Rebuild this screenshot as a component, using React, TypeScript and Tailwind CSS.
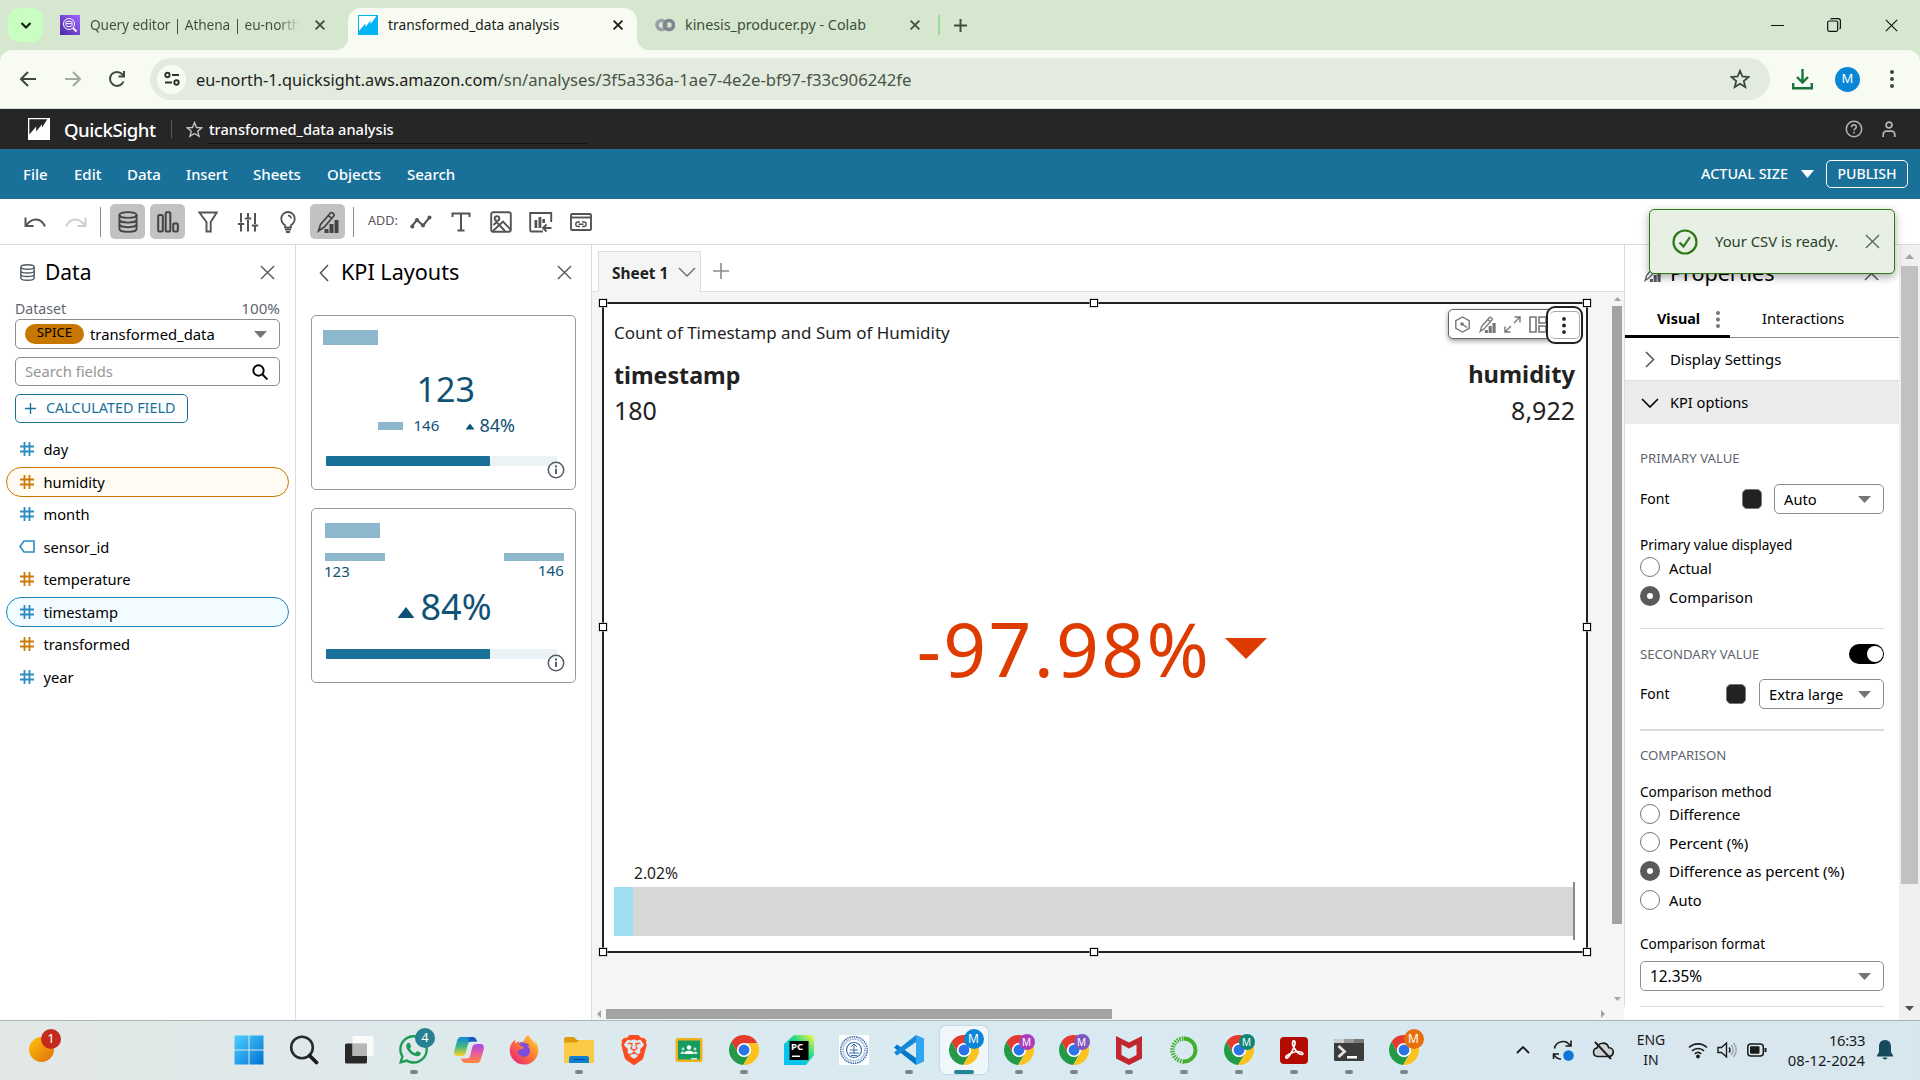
import React from 'react';
import { FaWhatsapp, FaFirefoxBrowser } from 'react-icons/fa';
import { SiBrave } from 'react-icons/si';

type IconProps = { w?: number; h?: number; box?: string; className?: string; sw?: number; children: React.ReactNode };

function Icon({ w = 20, h, box, className = '', sw = 1.6, children }: IconProps) {
  const height = h ?? w;
  return (
    <svg width={w} height={height} viewBox={box ?? `0 0 ${w} ${height}`} fill="none" stroke="currentColor" strokeWidth={sw} className={`shrink-0 ${className}`}>
      {children}
    </svg>
  );
}

const Close = ({ w = 16, sw = 1.5, className = '' }: { w?: number; sw?: number; className?: string }) => (
  <Icon w={w} box="0 0 16 16" sw={sw} className={className}><path d="M1 1l14 14M15 1L1 15" /></Icon>
);
const Database = ({ w = 20, h = 22 }: { w?: number; h?: number }) => (
  <Icon w={w} h={h} box="0 0 20 22" sw={1.9}>
    <ellipse cx="10" cy="4" rx="8.6" ry="2.9" />
    <path d="M1.4 4v14c0 1.600 3.900 2.900 8.600 2.900s8.600-1.300 8.600-2.900V4M1.400 8.700c0 1.600 3.900 2.900 8.600 2.900s8.600-1.300 8.600-2.900M1.400 13.300c0 1.600 3.900 2.900 8.600 2.900s8.600-1.300 8.600-2.900" />
  </Icon>
);
const PencilChart = ({ w = 22 }: { w?: number }) => (
  <Icon w={w} box="0 0 22 22" sw={1.7}>
    <path d="M1.500 20l2-6.500L13.200 2.200a1.800 1.800 0 0 1 2.600 0l.6.500a1.800 1.800 0 0 1 .2 2.500L7 16.300zM11.300 4.500l3.300 2.900" />
    <path d="M7.500 18h4v4h-4zM12.500 13h4v9h-4zM17.500 9h4v13h-4z" fill="currentColor" stroke="none" />
  </Icon>
);
const Dots = ({ h = 18, r = 2 }: { h?: number; r?: number }) => (
  <svg width="6" height={h} viewBox={`0 0 6 ${h}`} fill="currentColor" className="shrink-0">
    <circle cx="3" cy={r} r={r} /><circle cx="3" cy={h / 2} r={r} /><circle cx="3" cy={h - r} r={r} />
  </svg>
);
const Caret = ({ w = 14, h = 7, className = '' }: { w?: number; h?: number; className?: string }) => (
  <svg width={w} height={h} viewBox="0 0 14 7" preserveAspectRatio="none" className={`shrink-0 ${className}`}><path d="M0 0h14L7 7z" fill="currentColor" /></svg>
);
const Info = () => (
  <Icon w={18} className="text-[#545b64]" sw={1.5}><circle cx="9" cy="9" r="7.700" /><path d="M9 7.800v5.200M9 4.600v1.800" strokeWidth="1.900" /></Icon>
);

/* ---------- Browser window ---------- */

function TabStrip() {
  return (
    <div className="flex h-[50px] bg-[#d5e7ce] text-[#3e4f3c]">
      <div className="flex w-[348px] items-center pl-2">
        <div className="flex h-[34px] w-[35px] items-center justify-center rounded-[11px] bg-[#c8ffc0] text-[#101f10]">
          <Icon w={12} sw={2.200}><path d="M1.500 4l4.500 4.500L10.500 4" /></Icon>
        </div>
        <svg width="20" height="20" viewBox="0 0 20 20" className="ml-[17px] shrink-0">
          <defs><linearGradient id="ath" x1="0" y1="1" x2="1" y2="0"><stop stopColor="#4d27a8" /><stop offset="1" stopColor="#a166ff" /></linearGradient></defs>
          <path d="M0 0h20v20H0z" fill="url(#ath)" />
          <g fill="none" stroke="#fff" strokeWidth="1"><circle cx="9" cy="9" r="5.500" /><path d="M13 13l3.500 3.500" strokeWidth="1.800" /><ellipse cx="9" cy="7.500" rx="3" ry="1.300" /><path d="M6 7.500v3c0 1.500 6 1.500 6 0v-3" /></g>
        </svg>
        <div className="ml-[10px] w-[209px] overflow-hidden bg-linear-to-r from-[#3e4f3c] from-90% to-transparent bg-clip-text text-[13.7px] tracking-[-0.1px] whitespace-nowrap text-transparent">Query editor | Athena | eu-north</div>
        <Close w={10} sw={2.900} className="ml-[16px]" />
      </div>
      <div className="relative mt-2 flex w-[289px] items-center rounded-t-[13px] bg-[#f8fbf2] pb-[8px] pl-[10px] text-[#1b1d1a]">
        <svg width="12" height="12" viewBox="0 0 12 12" className="absolute bottom-0 -left-3"><path d="M12 0v12H0A12 12 0 0 0 12 0z" fill="#f8fbf2" /></svg>
        <svg width="12" height="12" viewBox="0 0 12 12" className="absolute -right-3 bottom-0"><path d="M0 0v12h12A12 12 0 0 1 0 0z" fill="#f8fbf2" /></svg>
        <svg width="20" height="20" viewBox="0 0 20 20" className="shrink-0">
          <path d="M0 0h20v20H0z" fill="#00b4f5" /><path d="M1 1h17.500L12.500 9V5.500L7.500 12V8.500L1 16z" fill="#fff" />
        </svg>
        <div className="ml-[10px] w-[225px] text-[13.8px]">transformed_data analysis</div>
        <Close w={10} sw={2.900} />
      </div>
      <div className="flex flex-1 items-center pl-[18px]">
        <Icon w={20} h={14} sw={3.600} className="text-[#9aa0a6]"><circle cx="6.500" cy="7" r="4.500" /><circle cx="14" cy="7" r="4.500" stroke="#7e8590" /></Icon>
        <div className="ml-[10px] w-[223px] text-[14.3px]">kinesis_producer.py - Colab</div>
        <Close w={10} sw={2.900} className="ml-[2px]" />
        <div className="ml-[18px] h-5 w-[2px] bg-[#9bdb91]" />
        <Icon w={13} sw={2} className="ml-[14px]"><path d="M6.500 0v13M0 6.500h13" /></Icon>
      </div>
      <div className="flex items-center pr-[22px] text-[#111]">
        <div className="h-px w-[13px] bg-[#111]" />
        <Icon w={14} sw={1.200} className="ml-[43px]"><rect x=".7" y="3" width="10" height="10.300" rx="1.500" /><path d="M3.500 1.200c.3-.5.800-.6 1.500-.6h6c1.300 0 2.400 1 2.400 2.400v6.500c0 .7-.2 1.200-.8 1.600" /></Icon>
        <Close w={13} sw={1.400} className="ml-[44px]" />
      </div>
    </div>
  );
}

function AddressBar() {
  return (
    <div className="bg-[#d5e7ce]">
      <div className="flex h-[59px] items-center rounded-t-xl border-b border-[#cfe3cc] bg-[#f8fbf2] text-[#3c4a3a]">
        <Icon w={16} sw={2} className="ml-5"><path d="M16 8H1.500M8 1L1 8l7 7" /></Icon>
        <Icon w={16} sw={2} className="ml-[29px] text-[#a3aaa0]"><path d="M0 8h14.500M8 1l7 7-7 7" /></Icon>
        <Icon w={18} sw={2} className="ml-[27px]"><path d="M15.500 11.500A7 7 0 1 1 14.200 4.200L16 6" /><path d="M16 1v5.500h-5.500" /></Icon>
        <div className="ml-[24px] flex h-[42px] w-[1620px] items-center rounded-full bg-[#e3ebdf] pl-[7px]">
          <div className="flex h-[29px] w-[29px] items-center justify-center rounded-full bg-[#f8fbf2] text-[#2b332a]">
            <Icon w={16} sw={1.900}><circle cx="3.400" cy="4" r="2.200" /><path d="M8 4h7M1 11.500h7" /><circle cx="12.500" cy="11.500" r="2.200" /></Icon>
          </div>
          <div className="ml-[10px] flex items-baseline pt-px text-[16.3px]">
            <span className="text-[#1b1d1a]">eu-north-1.quicksight.aws.amazon.com</span>
            <span className="text-[16.7px] text-[#4a5448]">/sn/analyses/3f5a336a-1ae7-4e2e-bf97-f33c906242fe</span>
          </div>
          <Icon w={20} sw={1.800} className="mr-5 ml-auto"><path d="M10 1.800l2.400 5.700 6.100.5-4.700 4 1.500 6-5.300-3.200L4.700 18l1.500-6-4.700-4 6.100-.5z" /></Icon>
        </div>
        <Icon w={21} sw={2.400} className="ml-[22px] text-[#18743a]"><path d="M10.500 0v13M5 8l5.500 5.500L16 8M1.200 14v5.300h18.600V14" /></Icon>
        <div className="ml-[22px] flex h-[25px] w-[25px] items-center justify-center rounded-full bg-[#0a86d6] text-[13px] text-white">M</div>
        <div className="ml-[29px]"><Dots h={18} r={2} /></div>
      </div>
    </div>
  );
}

/* ---------- QuickSight header ---------- */

function AppHeader() {
  return (
    <div className="flex h-10 items-center bg-[#262626] pl-7 text-white">
      <svg width="22" height="22" viewBox="0 0 22 22" className="shrink-0"><path d="M0 0h22v22H0z" fill="#fff" /><path d="M1.300 1.300h18L14 9.500V6.300L8.200 13.500V8.500L1.300 16.500z" fill="#262626" /></svg>
      <div className="ml-[14px] w-[92px] pt-[2px] text-[18.6px] font-medium tracking-tight">QuickSight</div>
      <div className="ml-[15px] h-[18px] w-px bg-[#5a5a5a]" />
      <Icon w={17} sw={1.300} className="ml-[14px] text-[#c8c8c8]"><path d="M8.500 1.500l2 5 5.400.3-4.200 3.400 1.400 5.200-4.600-2.900-4.600 2.900 1.400-5.200L1.100 6.800l5.400-.3z" /></Icon>
      <div className="ml-1 flex h-[29px] w-[380px] items-center border-b border-[#111] pt-[2px] pl-[2px] text-[14.600px] font-medium">transformed_data analysis</div>
      <div className="ml-auto flex items-center pr-[24px] text-[#b5b5b5]">
        <Icon w={18} sw={1.500}><circle cx="9" cy="9" r="7.700" /><path d="M6.600 7.300C6.700 4 11.400 4.200 11.300 7c0 1.600-2.300 1.700-2.300 3.500M9 11.800v1.600" /></Icon>
        <Icon w={14} h={16} sw={1.700} className="ml-[19px]"><circle cx="7" cy="4" r="2.900" /><path d="M1.200 16v-2.500c0-2 1.400-3.300 3.300-3.300h5c1.900 0 3.300 1.300 3.300 3.300V16" /></Icon>
      </div>
    </div>
  );
}

function MenuBar() {
  return (
    <div className="flex h-[50px] items-center bg-[#19719a] pl-[23px] text-[15px] font-medium text-white">
      <div className="w-[51px]">File</div>
      <div className="w-[53px]">Edit</div>
      <div className="w-[59px]">Data</div>
      <div className="w-[67px] pt-px text-[14.600px]">Insert</div>
      <div className="w-[74px]">Sheets</div>
      <div className="w-[80px]">Objects</div>
      <div>Search</div>
      <div className="mr-[13px] ml-auto text-[14.4px]">ACTUAL SIZE</div>
      <Caret w={13} h={8} />
      <div className="mr-3 ml-[12px] flex h-[28px] w-[82px] items-center justify-center rounded-[5px] border border-white text-[14.1px]">PUBLISH</div>
    </div>
  );
}

const Tool = ({ active, children }: { active?: boolean; children: React.ReactNode }) => (
  <div className={`flex h-[35px] w-[35px] items-center justify-center rounded-[5px] ${active ? 'bg-[#c2c2c2] text-[#444]' : ''}`}>{children}</div>
);

function Toolbar() {
  return (
    <div className="flex h-[46px] items-center border-b border-[#dcdcdc] bg-white pl-[17px] text-[#545454]">
      <div className="flex items-center gap-[6px]">
        <Tool><Icon w={22} h={14} sw={2}><path d="M1.500 2.500v8.500h8M2 10.500C8 2 17 2.500 21 11.500" /></Icon></Tool>
        <Tool><Icon w={22} h={14} sw={2} className="text-[#cfcfcf]"><path d="M20.500 2.500v8.500h-8M20 10.500C14 2 5 2.500 1 11.500" /></Icon></Tool>
      </div>
      <div className="ml-[7px] h-[30px] w-px bg-[#8c8c8c]" />
      <div className="ml-[9px] flex gap-[5px]">
        <Tool active><Database /></Tool>
        <Tool active><Icon w={22} sw={2}><rect x="1.200" y="4" width="4.600" height="16.500" rx="1" /><rect x="8.700" y="1.200" width="4.600" height="19.300" rx="1" /><rect x="16.200" y="12.500" width="4.600" height="8" rx="1" /></Icon></Tool>
        <Tool><Icon w={20} h={22} sw={1.900}><path d="M1.300 1.500h17.400l-6 9.500v9.500H8.500V11z" /></Icon></Tool>
        <Tool><Icon w={22} sw={2}><path d="M4 2v9.500M4 14v6.500M11 2v4.500M11 9v11.500M18 2v11M18 15.500v5M.8 13h6.400M7.800 7.500h6.400M14.800 14.500h6.400" /></Icon></Tool>
        <Tool><Icon w={18} h={22} sw={1.800}><path d="M6 16.300v-2.100C3.500 12.500 2.300 10.400 2.300 7.700a6.700 6.700 0 0 1 13.400 0c0 2.700-1.200 4.800-3.700 6.500v2.100zM6 18.500h6M7 21h4" /><path d="M9 4.500c2 .2 3 1.200 3.200 3" strokeWidth="1.400" /></Icon></Tool>
        <Tool active><PencilChart /></Tool>
      </div>
      <div className="ml-[8px] h-[30px] w-px bg-[#8c8c8c]" />
      <div className="ml-[14px] w-[35px] text-[12.6px]">ADD:</div>
      <div className="flex items-center gap-[5px]">
        <Tool><Icon w={22} h={14} sw={2}><path d="M1.500 11.500L7 5l6 5.500L20 2" /><g fill="currentColor" stroke="none"><circle cx="2.300" cy="11.500" r="2" /><circle cx="7" cy="5" r="2" /><circle cx="13" cy="10.500" r="2" /><circle cx="19.500" cy="2.500" r="2" /></g></Icon></Tool>
        <Tool><Icon w={20} sw={2}><path d="M1.500 5V1.500h17V5M10 1.500v17M6.500 18.500h7" /></Icon></Tool>
        <Tool><Icon w={22} sw={1.900}><rect x="1.200" y="1.200" width="19.600" height="19.600" rx="2" /><circle cx="7" cy="7.500" r="2.300" /><path d="M3 20l10-9.500 8 8.500M3.500 14l3-3 8.500 9" /></Icon></Tool>
        <Tool><Icon w={24} h={22} sw={1.900}><path d="M14 20.500H2.500A1.300 1.300 0 0 1 1.200 19V2h21v9" /><path d="M14.500 17h8M17.500 13.500L14 17l3.500 3.500" /><path d="M5.500 9h2.800v8H5.500zM9.500 6h2.800v11H9.500zM13.300 8H16v4h-2.700z" fill="currentColor" stroke="none" /></Icon></Tool>
        <Tool><Icon w={22} h={18} sw={1.900}><rect x="1" y="1" width="20" height="16" rx="1" /><path d="M1 4.500h20" /><path d="M10 13.500H8a2.200 2.200 0 0 1 0-4.500h2M12 9h2a2.200 2.200 0 0 1 0 4.500h-2M8.500 11.200h5" strokeWidth="1.400" /></Icon></Tool>
      </div>
    </div>
  );
}

/* ---------- Left panels ---------- */

const Hash = ({ orange }: { orange?: boolean }) => (
  <Icon w={14} sw={1.800} className={orange ? 'text-[#cc7a0a]' : 'text-[#2b8cc4]'}><path d="M4.500 0v14M9.500 0v14M0 4.500h14M0 9.500h14" /></Icon>
);
const fields = [
  { name: 'day' },
  { name: 'humidity', orange: true, on: true },
  { name: 'month' },
  { name: 'sensor_id', tag: true },
  { name: 'temperature', orange: true },
  { name: 'timestamp', on: true },
  { name: 'transformed', orange: true },
  { name: 'year' },
];

function DataPanel() {
  return (
    <div className="w-[296px] shrink-0 border-r border-[#dcdcdc] bg-white">
      <div className="flex h-[55px] items-center pr-5 pl-[19px] text-[#545b64]">
        <Database w={17} h={17} />
        <div className="ml-[9px] flex-1 text-[21px] text-black">Data</div>
        <Close w={15} />
      </div>
      <div className="px-[15px]">
        <div className="flex h-[19px] items-center justify-between pb-[2px] text-[14.1px] text-[#5f6670]"><span>Dataset</span><span className="text-[15.2px]">100%</span></div>
        <div className="flex h-[30px] items-center rounded-[5px] border border-[#8c8c8c] pr-3 pl-[9px] text-[14.8px]">
          <div className="flex h-5 w-[59px] items-start justify-center rounded-full bg-[#c77700] text-[13.2px] leading-[17px]">SPICE</div>
          <div className="ml-[6px] flex-1">transformed_data</div>
          <Caret w={13} className="text-[#757575]" />
        </div>
        <div className="mt-2 flex h-[29px] items-center justify-between rounded-[5px] border border-[#8c8c8c] pr-[11px] pl-[9px] text-[14.8px] text-[#969696]">
          Search fields
          <Icon w={16} sw={1.900} className="text-black"><circle cx="6.500" cy="6.500" r="5.200" /><path d="M10.500 10.500l5 5" /></Icon>
        </div>
        <div className="mt-2 flex h-[29px] w-[173px] items-center rounded-[5px] border border-[#19719a] pb-px pl-[9px] text-[14.4px] text-[#19719a]">
          <Icon w={11} sw={1.400} className="mr-[10px]"><path d="M5.500 0v11M0 5.500h11" /></Icon>
          CALCULATED FIELD
        </div>
      </div>
      <div className="mt-[10px] pr-[6px] pl-[6px]">
        {fields.map((f) => (
          <div key={f.name} className="flex h-[32.5px] items-center">
            <div className={`flex h-[30px] w-full items-center rounded-full border pl-[13px] ${f.on ? (f.orange ? 'border-[#c77700] bg-[#fffbf2]' : 'border-[#1f83bd] bg-[#f2fbff]') : 'border-transparent'}`}>
              {f.tag ? <Icon w={16} h={13} sw={1.600} className="-mr-px -ml-px text-[#2b8cc4]"><path d="M5 1h10v11H5L1 6.500z" /></Icon> : <Hash orange={f.orange} />}
              <span className="ml-[9.500px] text-[14.700px]">{f.name}</span>
            </div>
          </div>
        ))}
      </div>
    </div>
  );
}

const LayoutCard = ({ children }: { children: React.ReactNode }) => (
  <div className="relative mx-[15px] h-[175px] rounded-[5px] border border-[#9a9a9a] bg-white">
    <svg width="263" height="173" viewBox="312 316 263 173" fill="#0f5275" className="font-['Noto_Sans',sans-serif]">
      {children}
      <rect x="326" y="456" width="231" height="10" rx="1" fill="#ecf3f6" />
      <rect x="326" y="456" width="164" height="10" rx="1" fill="#19719a" />
    </svg>
    <div className="absolute right-[10px] bottom-[10px]"><Info /></div>
  </div>
);

function LayoutsPanel() {
  return (
    <div className="w-[296px] shrink-0 border-r border-[#dcdcdc] bg-white">
      <div className="flex h-[70px] items-start pt-[12px] pr-[19px] pl-[23px] text-[#545b64]">
        <div className="flex h-[31px] w-full items-center">
          <Icon w={10} h={18}><path d="M9 1L1.500 9 9 17" /></Icon>
          <div className="ml-[12px] flex-1 text-[21.6px] text-black">KPI Layouts</div>
          <Close w={15} />
        </div>
      </div>
      <LayoutCard>
        <rect x="323" y="330" width="55" height="15" fill="#8db7cc" />
        <text x="416.500" y="402" fontSize="34">123</text>
        <rect x="378" y="422" width="25" height="8" fill="#8db7cc" />
        <text x="413.500" y="430.500" fontSize="15">146</text>
        <path d="M465.500 429.500h9l-4.500-6z" />
        <text x="479.500" y="432" fontSize="18">84%</text>
      </LayoutCard>
      <div className="h-[18px]" />
      <LayoutCard>
        <rect x="325" y="330" width="55" height="15" fill="#8db7cc" />
        <rect x="325" y="360" width="60" height="8" fill="#8db7cc" />
        <rect x="504" y="360" width="60" height="8" fill="#8db7cc" />
        <text x="324" y="383.500" fontSize="15">123</text>
        <text x="538" y="383" fontSize="15">146</text>
        <path d="M397.500 425h17l-8.500-11z" />
        <text x="420.500" y="427" fontSize="36">84%</text>
      </LayoutCard>
    </div>
  );
}

/* ---------- Sheet canvas ---------- */

const Handle = ({ className }: { className: string }) => <div className={`absolute h-2 w-2 border border-black bg-white outline outline-[#bbb]/50 ${className}`} />;

function KpiVisual() {
  return (
    <div className="relative flex h-[651px] w-[986px] flex-col border-2 border-[#222] bg-white pr-[11px] pl-[10px] text-[#222]">
      <Handle className="-top-[5px] -left-[5px]" /><Handle className="-top-[5px] left-[486px]" /><Handle className="-top-[5px] -right-[5px]" />
      <Handle className="top-[319px] -left-[5px]" /><Handle className="top-[319px] -right-[5px]" />
      <Handle className="-bottom-[5px] -left-[5px]" /><Handle className="-bottom-[5px] left-[486px]" /><Handle className="-bottom-[5px] -right-[5px]" />
      <div className="absolute top-[5px] right-[6px] flex h-[30px] w-[132px] items-center rounded-[5px] border border-[#666] bg-white pl-[5px] text-[#757575] shadow-[0_2px_5px_rgba(0,0,0,.4)]">
        <Icon w={17} sw={1.400}><path d="M8.500 1l6.700 3.700v7.600L8.500 16l-6.700-3.700V4.700z" /><circle cx="8" cy="8" r="1.800" fill="currentColor" stroke="none" /><path d="M8 8l5 3.500" /></Icon>
        <div className="ml-[8px]"><PencilChart w={17} /></div>
        <Icon w={17} sw={1.400} className="ml-[8px]"><path d="M10 7l6-6M10.500 1H16v5.500M7 10l-6 6M1 10.500V16h5.500" /></Icon>
        <Icon w={17} sw={1.600} className="ml-[8px]"><path d="M1 1h6v15H1zM10 1h7v6h-7zM10 10h7v6h-7z" /></Icon>
      </div>
      <div className="absolute top-[2px] right-[3px] flex h-[38px] w-[37px] items-center justify-center rounded-[9px] border-2 border-[#222] bg-white">
        <div className="flex h-[28px] w-[30px] items-center justify-center rounded-[5px] border-t border-r border-b border-[#aaa]"><Dots h={17} r={1.900} /></div>
      </div>
      <div className="mt-[16px] h-[25px] text-[17px] leading-[25px]">Count of Timestamp and Sum of Humidity</div>
      <div className="mt-[12px] flex h-[36px] items-center justify-between text-[23.2px] font-bold"><span>timestamp</span><span className="text-[23.700px]">humidity</span></div>
      <div className="flex h-[36px] items-center justify-between text-[25px]"><span>180</span><span>8,922</span></div>
      <div className="flex flex-1 items-center justify-center gap-[14px] pt-[5px] pr-[5px] text-[#de3b00]">
        <span className="text-[75px] leading-[100px] tracking-[2.300px]">-97.98%</span>
        <Caret w={42} h={21} />
      </div>
      <div className="ml-5 h-[20px] text-[15.600px] leading-[22px]">2.02%</div>
      <div className="mb-[11px] flex h-[58px] items-center">
        <div className="h-[49px] w-[19px] bg-[#9fdef1]" />
        <div className="h-[49px] flex-1 bg-[#d8d8d8]" />
        <div className="h-[58px] w-[2px] bg-[#888]" />
      </div>
    </div>
  );
}

function Canvas() {
  return (
    <div className="flex w-[1032px] shrink-0 flex-col bg-[#f5f5f5]">
      <div className="flex h-[47px] items-end border-b border-[#dcdcdc] bg-white pl-[6px]">
        <div className="-mb-px flex h-[41px] w-[103px] items-center border-x border-t border-[#dcdcdc] bg-[#f5f5f5] pt-[3px] pl-[13px] text-[15.400px] font-bold text-[#222]">
          Sheet 1
          <Icon w={18} h={10} sw={1.500} className="mb-1 ml-[10px] text-[#757575]"><path d="M1 1l8 8 8-8" /></Icon>
        </div>
        <Icon w={16} sw={1.600} className="mb-[12px] ml-[12px] text-[#8c8c8c]"><path d="M8 0v16M0 8h16" /></Icon>
      </div>
      <div className="flex h-[716px]">
        <div className="w-[1020px] pt-[10px] pl-[10px]"><KpiVisual /></div>
        <div className="flex w-[10px] flex-col items-center pt-[5px] text-[#a3a3a3]">
          <Caret w={7} h={4} className="rotate-180" />
          <div className="mt-[5px] h-[618px] w-[10px] bg-[#a3a3a3]" />
          <Caret w={7} h={4} className="mt-[73px]" />
        </div>
      </div>
      <div className="mt-px flex h-[10px] items-center pl-[3px] text-[#a3a3a3]">
        <Caret w={8} h={4} className="rotate-90" />
        <div className="ml-[3px] h-[10px] w-[506px] bg-[#a3a3a3]" />
        <Caret w={8} h={4} className="ml-[487px] -rotate-90" />
      </div>
    </div>
  );
}

/* ---------- Properties ---------- */

const Radio = ({ label, on }: { label: string; on?: boolean }) => (
  <div className="flex h-[28.700px] items-center text-[14.700px]">
    {on ? <div className="flex h-5 w-5 items-center justify-center rounded-full bg-[#5a5a5a]"><div className="h-[6px] w-[6px] rounded-full bg-white" /></div> : <div className="h-5 w-5 rounded-full border border-[#757575]" />}
    <span className={`ml-[9px] pt-px ${label.includes('%') ? 'text-[15px]' : ''}`}>{label}</span>
  </div>
);
const Group = ({ children }: { children: React.ReactNode }) => <div className="h-5 text-[13.2px] leading-5 text-[#5f6670]">{children}</div>;
const FontRow = ({ value, wide }: { value: string; wide?: boolean }) => (
  <div className="flex h-[30px] items-center">
    <span className="flex-1 pb-px text-[14px]">Font</span>
    <div className={`h-5 w-5 rounded-[5px] border border-[#777] bg-[#222] ${wide ? 'mr-[13px]' : 'mr-3'}`} />
    <div className={`flex h-[30px] items-center justify-between rounded-[5px] border border-[#8c8c8c] pr-3 pl-[9px] text-[14.700px] ${wide ? 'w-[125px]' : 'w-[110px]'}`}>
      {value}<Caret w={13} className="text-[#757575]" />
    </div>
  </div>
);

function Properties() {
  return (
    <div className="w-[275px] shrink-0 border-l border-[#dcdcdc] bg-white">
      <div className="flex h-[56px] items-center pr-5 pl-[19px] text-[#545b64]">
        <PencilChart w={17} />
        <div className="ml-[9px] flex-1 text-[21.500px] text-black">Properties</div>
        <Close w={15} />
      </div>
      <div className="flex h-[37px] border-b border-[#8c8c8c] text-[14.4px]">
        <div className="-mb-px flex w-[105px] items-center border-b-[3px] border-black pt-[2px] pl-[32px] font-bold">
          <span className="w-[58px]">Visual</span><span className="text-[#757575]"><Dots h={17} r={2} /></span>
        </div>
        <div className="flex items-center pl-[32px] text-[14.600px]">Interactions</div>
      </div>
      <div className="flex h-[43px] items-center border-b border-[#dcdcdc] pl-5 text-[14.900px]">
        <Icon w={10} h={17} className="mr-[15px] text-[#545b64]"><path d="M1 1l7.500 7.500L1 16" /></Icon>Display Settings
      </div>
      <div className="flex h-[43px] items-center bg-[#ebebeb] pl-[16px] text-[14.600px]">
        <Icon w={18} h={10} className="mr-[11px]"><path d="M1 1l8 8 8-8" /></Icon>KPI options
      </div>
      <div className="flex flex-col px-[15px] pt-[24px]">
        <Group>PRIMARY VALUE</Group>
        <div className="mt-[16px]"><FontRow value="Auto" /></div>
        <div className="mt-[21px] h-[18px] text-[13.6px] leading-5">Primary value displayed</div>
        <Radio label="Actual" />
        <Radio label="Comparison" on />
        <div className="mt-[18px] h-px bg-[#dcdcdc]" />
        <div className="mt-[15px] flex items-center justify-between">
          <Group>SECONDARY VALUE</Group>
          <div className="flex h-5 w-[35px] items-center justify-end rounded-full bg-black pr-[1.500px]"><div className="h-4 w-4 rounded-full bg-white" /></div>
        </div>
        <div className="mt-[15px]"><FontRow value="Extra large" wide /></div>
        <div className="mt-[20px] h-[2px] bg-[#dcdcdc]" />
        <div className="mt-[14px]"><Group>COMPARISON</Group></div>
        <div className="mt-[17px] h-[17px] text-[13.600px] leading-5">Comparison method</div>
        <Radio label="Difference" />
        <Radio label="Percent (%)" />
        <Radio label="Difference as percent (%)" on />
        <Radio label="Auto" />
        <div className="mt-[20px] h-[18px] text-[13.600px] leading-5">Comparison format</div>
        <div className="mt-[9px] flex h-[30px] items-center justify-between rounded-[5px] border border-[#8c8c8c] pr-3 pl-[9px] text-[15.400px]">12.35%<Caret w={13} className="text-[#757575]" /></div>
        <div className="mt-[15px] h-px bg-[#dcdcdc]" />
      </div>
    </div>
  );
}

function Toast() {
  return (
    <div className="absolute top-[209px] right-[25px] flex h-[65px] w-[246px] items-center rounded-[5px] border border-[#2d7a16] bg-[#e8f0e6] pl-[22px] shadow-[0_3px_8px_rgba(0,0,0,.35)]">
      <Icon w={26} sw={2.200} className="text-[#2d7a16]"><circle cx="13" cy="13" r="11.500" /><path d="M7.500 13.500l4 4L18 8" /></Icon>
      <div className="ml-[17px] flex-1 text-[14.8px] text-[#2a3f26]">Your CSV is ready.</div>
      <Close w={15} className="mr-[14px] text-[#5d6b5a]" />
    </div>
  );
}

/* ---------- Taskbar ---------- */

function Chrome({ badge, color, big }: { badge?: boolean; color?: string; big?: boolean }) {
  return (
    <div className="relative">
      <svg width="30" height="30" viewBox="2 2 44 44">
        <path d="M24 14H43.600A22 22 0 0 0 5.540 12.030L15.340 29A10 10 0 0 1 24 14Z" fill="#e33b2e" />
        <path d="M15.340 29L5.540 12.030A22 22 0 0 0 22.860 45.970L32.660 29A10 10 0 0 1 15.340 29Z" fill="#229a48" />
        <path d="M32.660 29L22.860 45.970A22 22 0 0 0 43.600 14L24 14A10 10 0 0 1 32.660 29Z" fill="#fcc31e" />
        <circle cx="24" cy="24" r="10.300" fill="#fff" /><circle cx="24" cy="24" r="8" fill="#2b74e8" />
      </svg>
      {badge && <div className={`absolute flex items-center justify-center rounded-full leading-none text-white ${color} ${big ? '-top-[6px] -right-[5px] h-5 w-5 text-[12px]' : '-top-px -right-px h-4 w-4 text-[10px]'}`}>M</div>}
    </div>
  );
}

const Slot = ({ dot, active, children }: { dot?: boolean; active?: boolean; children: React.ReactNode }) => (
  <div className="relative flex h-full w-[55px] items-center justify-center pb-[2px]">
    <div className={`flex h-[48px] w-[48px] items-center justify-center rounded-md ${active ? 'bg-white/60 shadow-[0_0_2px_#9ab]' : ''}`}>{children}</div>
    {dot && <div className="absolute bottom-[6px] h-1 w-2 rounded-full bg-[#7c868a]" />}
    {active && <div className="absolute bottom-[6px] h-1 w-5 rounded-full bg-[#23839b]" />}
  </div>
);
const Pic = ({ children }: { children: React.ReactNode }) => <svg width="30" height="30" viewBox="0 0 30 30">{children}</svg>;

function Taskbar() {
  return (
    <div className="flex h-[60px] items-stretch border-t border-[#a9b4b8] bg-linear-to-r from-[#e2e8e6] via-[#d9eaf2] to-[#d8e6ee] text-[#1a1a1a]">
      <svg width="0" height="0" className="absolute">
        <defs>
          <linearGradient id="ff" x1="1" y1="0" x2="0" y2="1"><stop stopColor="#ffe226" /><stop offset=".5" stopColor="#ff7139" /><stop offset="1" stopColor="#e31587" /></linearGradient>
          <linearGradient id="win" x1="0" y1="0" x2="1" y2="1"><stop stopColor="#4fd0ff" /><stop offset="1" stopColor="#0072d4" /></linearGradient>
          <linearGradient id="sun" x1="0" y1="0" x2="1" y2="1"><stop stopColor="#ffc60a" /><stop offset="1" stopColor="#e06c0c" /></linearGradient>
          <linearGradient id="cpA" x1="0" y1="0" x2="0" y2="1"><stop stopColor="#1286d8" /><stop offset=".5" stopColor="#3fb984" /><stop offset="1" stopColor="#ffd21f" /></linearGradient>
          <linearGradient id="cpB" x1="0" y1="0" x2="0" y2="1"><stop stopColor="#a44be8" /><stop offset=".5" stopColor="#ea5c9a" /><stop offset="1" stopColor="#ff8a3c" /></linearGradient>
          <linearGradient id="pc" x1="1" y1="0" x2="0" y2="1"><stop stopColor="#fcf84a" /><stop offset=".4" stopColor="#21d789" /><stop offset=".7" stopColor="#07c3f2" /></linearGradient>
        </defs>
      </svg>
      <div className="w-[221px] pt-[8px] pl-[29px]">
        <div className="relative h-[34px] w-[34px]">
          <svg width="26" height="34" viewBox="0 0 26 34"><circle cx="12.500" cy="20.500" r="12.500" fill="url(#sun)" /></svg>
          <div className="absolute top-0 left-[12px] flex h-5 w-5 items-center justify-center rounded-full bg-[#c42b1c] text-[13px] text-white">1</div>
        </div>
      </div>
      <Slot><Pic><path d="M.5 .5h14v14h-14zM15.500 .5h14v14h-14zM.5 15.500h14v14h-14zM15.500 15.500h14v14h-14z" fill="url(#win)" /></Pic></Slot>
      <Slot><Pic><circle cx="13" cy="12.500" r="10.800" fill="#dfe9ec" stroke="#2a2a2a" strokeWidth="2.600" /><path d="M20.500 20.500l7 7" stroke="#1a1a1a" strokeWidth="3.800" strokeLinecap="round" /></Pic></Slot>
      <Slot><Pic><rect x="1" y="8.500" width="22" height="20" rx="1.500" fill="#292929" /><rect x="8.500" y="1" width="21" height="20" rx="1" fill="#fff" fillOpacity=".8" /><path d="M8.500 8.500H23V21H8.500z" fill="#b5b5b5" /></Pic></Slot>
      <Slot dot>
        <div className="relative text-[#1f9a57]"><FaWhatsapp size={33} /><div className="absolute -top-[5px] -right-[5px] flex h-5 w-5 items-center justify-center rounded-full bg-[#27808f] text-[13px] text-white">4</div></div>
      </Slot>
      <Slot><Pic><path d="M7 2h11c3 0 4 1.500 5 4.500H17c-2 0-2.600 1-3.300 3.500l-2 8c-.7 2-1.700 3-4.700 3H3.500C.5 21-.5 18.500.5 15L3 6c.8-2.600 2-4 4-4z" fill="url(#cpA)" /><path d="M23 28H12c-3 0-4-1.500-5-4.500h6c2 0 2.600-1 3.300-3.500l2-8c.7-2 1.700-3 4.700-3h3.500c3 0 4 2.500 3 6L27 24c-.8 2.600-2 4-4 4z" fill="url(#cpB)" /><path d="M15 2h3c3 0 4 1.500 5 4.500H17c-1 0-2 .3-2.500 1z" fill="#1657c4" /></Pic></Slot>
      <Slot>
        <svg width="30" height="30" viewBox="0 0 512 512"><circle cx="256" cy="270" r="160" fill="#7d4be0" /><FaFirefoxBrowser size={512} fill="url(#ff)" color="url(#ff)" /></svg>
      </Slot>
      <Slot dot><Pic><path d="M0 4a2 2 0 0 1 2-2h8l3 3h15a2 2 0 0 1 2 2v20H0z" fill="#e09b0d" /><path d="M0 7.500h13L15 5h13a2 2 0 0 1 2 2v21H0z" fill="#fccb45" /><path d="M5 28v-5a2 2 0 0 1 2-2h16a2 2 0 0 1 2 2v5z" fill="#1080d0" /><path d="M9 24.500h12" stroke="#0a4a8c" /></Pic></Slot>
      <Slot><div className="text-[#fb4b20]"><SiBrave size={30} /></div></Slot>
      <Slot><Pic><rect x="1.500" y="3" width="27" height="24" rx="2" fill="#eeb21d" /><path d="M4 5.500h22v19H4z" fill="#179c5f" /><g fill="#fff"><circle cx="15" cy="12.500" r="2.200" /><path d="M10 19c0-4.500 10-4.500 10 0z" /><circle cx="9" cy="14" r="1.400" opacity=".7" /><circle cx="21" cy="14" r="1.400" opacity=".7" /><path d="M17 23h6v1.500h-6zM6.500 19c0-3 3-3 4-2l-1 2zM23.500 19c0-3-3-3-4-2l1 2z" opacity=".8" /></g></Pic></Slot>
      <Slot dot><Chrome /></Slot>
      <Slot><Pic><path d="M10 0h18.500L30 2v18l-8 10H0V9z" fill="url(#pc)" /><path d="M5.500 6h19v19h-19z" fill="#000" /><text x="7" y="15" fontSize="9.500" fontWeight="700" fill="#fff" className="font-['Noto_Sans',sans-serif]">PC</text><path d="M8 20.500h8v1.500H8z" fill="#fff" /></Pic></Slot>
      <Slot><Pic><path d="M0 0h30v30H0z" fill="#fff" /><g fill="none" stroke="#3c6fb0"><circle cx="15" cy="15" r="13.300" strokeWidth="1.600" strokeDasharray="1.500 .8" /><circle cx="15" cy="15" r="11" strokeWidth="1.800" strokeDasharray="1 .7" opacity=".6" /><circle cx="15" cy="15" r="7.500" strokeWidth="1.200" /><path d="M10 18h10M15 9v10M12 12l3-3 3 3M11 15h8M12 20.500h6" /></g></Pic></Slot>
      <Slot dot><Pic><path d="M22 0v30L0 12.500 3 9.500 22 23z" fill="#0078c8" /><path d="M22 0L0 17.500l3 3L22 7z" fill="#1688d6" /><path d="M22 0l8 3.500v23L22 30z" fill="#2fa6f2" /></Pic></Slot>
      <Slot active><Chrome badge big color="bg-[#0a86d6]" /></Slot>
      <Slot dot><Chrome badge color="bg-[#ab3fc0]" /></Slot>
      <Slot dot><Chrome badge color="bg-[#7e57c2]" /></Slot>
      <Slot dot><Pic><path d="M2 1l13 6.500L28 1v22.500L15 30 2 23.500zM7.500 9.500v10.500l7.500 4 7.500-4V9.500L15 13.500z" fill="#c1272d" fillRule="evenodd" /></Pic></Slot>
      <Slot dot><Pic><path d="M15 3.500a11.500 11.500 0 0 1 0 23" fill="none" stroke="#43b02a" strokeWidth="3.800" /><path d="M15 26.500a11.500 11.500 0 0 1 0-23" fill="none" stroke="#43b02a" strokeWidth="4.500" strokeDasharray="1.500 1.100" /></Pic></Slot>
      <Slot dot><Chrome badge color="bg-[#0f8578]" /></Slot>
      <Slot dot><Pic><rect x="1" y="2" width="28" height="27" rx="4" fill="#b30b00" /><path d="M7 23c-2-2 7-6.500 12-6.500s6 3 3.500 3C19 19.500 13.500 12 13.500 8.500s3-3.500 2.500 0C15.500 12.500 9 25 7 23z" fill="none" stroke="#fff" strokeWidth="1.700" /></Pic></Slot>
      <Slot dot><Pic><rect x="0" y="4" width="30" height="22" rx="1.500" fill="#3c3c3c" /><path d="M0 5.500A1.500 1.500 0 0 1 1.500 4H10v4H0z" fill="#ccc" /><path d="M10 4h10v4H10z" fill="#999" /><path d="M20 4h8.500A1.500 1.500 0 0 1 30 5.500V8H20z" fill="#777" /><path d="M4.500 11l6 5.500-6 5.500" fill="none" stroke="#e4e4e4" strokeWidth="2.800" /><path d="M13 21h10v2.500H13z" fill="#fff" /></Pic></Slot>
      <Slot dot><Chrome badge big color="bg-[#e8700a]" /></Slot>

      <div className="ml-auto flex items-center pr-[27px] pb-[2px]">
        <Icon w={14} h={8} sw={1.800}><path d="M1 7l6-6 6 6" /></Icon>
        <Icon w={22} sw={1.600} className="ml-[22px]"><path d="M2.500 9.500A8.500 8.500 0 0 1 18 6.500M19 1.500v5.500h-5.500M1.500 20v-5H7M2 15.500c1.500 3 4 4.500 7 4.500" /><circle cx="16.500" cy="16.500" r="5.300" fill="#0a78d4" stroke="none" /></Icon>
        <Icon w={22} h={20} sw={1.600} className="ml-[18px]"><path d="M5.500 16.500a4.300 4.300 0 0 1-.5-8.500 6 6 0 0 1 11.700-.3 4.400 4.400 0 0 1 .3 8.800z" fill="#cdd3d6" /><path d="M3 2l16 17" strokeWidth="1.900" /></Icon>
        <div className="ml-[20px] w-[34px] text-center text-[14px] leading-[20px]">ENG<br />IN</div>
        <Icon w={20} h={18} sw={1.600} className="ml-[20px]"><path d="M1 6.500a13 13 0 0 1 18 0M4 9.800a8.800 8.800 0 0 1 12 0M6.800 12.800a4.800 4.800 0 0 1 6.400 0" /><circle cx="10" cy="15.500" r="1.900" fill="currentColor" stroke="none" /></Icon>
        <Icon w={20} h={18} sw={1.400} className="ml-[9px]"><path d="M1 6.500v5h3.500L9.500 16V2L4.500 6.500zM12 6.500c1.300 1.500 1.300 3.500 0 5" /><path d="M14.200 4c2.500 2.800 2.500 7.200 0 10M16.500 2c3.600 4 3.600 10 0 14" stroke="#9aa5aa" /></Icon>
        <Icon w={20} h={14} sw={1.500} className="ml-[10px]"><rect x=".8" y="1" width="15.500" height="12" rx="3" /><rect x="3" y="3.200" width="9.500" height="7.600" rx="1" fill="currentColor" stroke="none" /><path d="M18.500 5v4" strokeWidth="2" /></Icon>
        <div className="ml-[20px] w-[78px] text-right text-[14.800px] leading-[20px] tracking-tight whitespace-nowrap">16:33<br /><span className="tracking-normal">08-12-2024</span></div>
        <svg width="16" height="20" viewBox="0 0 16 20" className="ml-[12px]"><path d="M8 0c-3.800 0-6 2.800-6 6.500V12L0 15.500v1h16v-1L14 12V6.500C14 2.800 11.800 0 8 0zM5.500 17.500a2.600 2.600 0 0 0 5 0z" fill="#174a5c" /></svg>
      </div>
    </div>
  );
}

export default function App() {
  return (
    <div className="relative flex h-[1080px] w-[1920px] flex-col overflow-hidden bg-white font-['Noto_Sans','Open_Sans',sans-serif] leading-normal text-black">
      <TabStrip />
      <AddressBar />
      <AppHeader />
      <MenuBar />
      <Toolbar />
      <div className="flex h-[775px]">
        <DataPanel />
        <LayoutsPanel />
        <Canvas />
        <div className="h-[775px] overflow-hidden"><Properties /></div>
        <div className="flex w-[21px] flex-col items-center bg-[#f0f0f0] pt-[9px]">
          <Caret w={9} h={5} className="rotate-180 text-[#a3a3a3]" />
          <div className="mt-[7px] h-[618px] w-[17px] bg-[#c1c1c1]" />
          <Caret w={9} h={5} className="mt-[122px] text-[#505050]" />
        </div>
      </div>
      <Taskbar />
      <Toast />
    </div>
  );
}
